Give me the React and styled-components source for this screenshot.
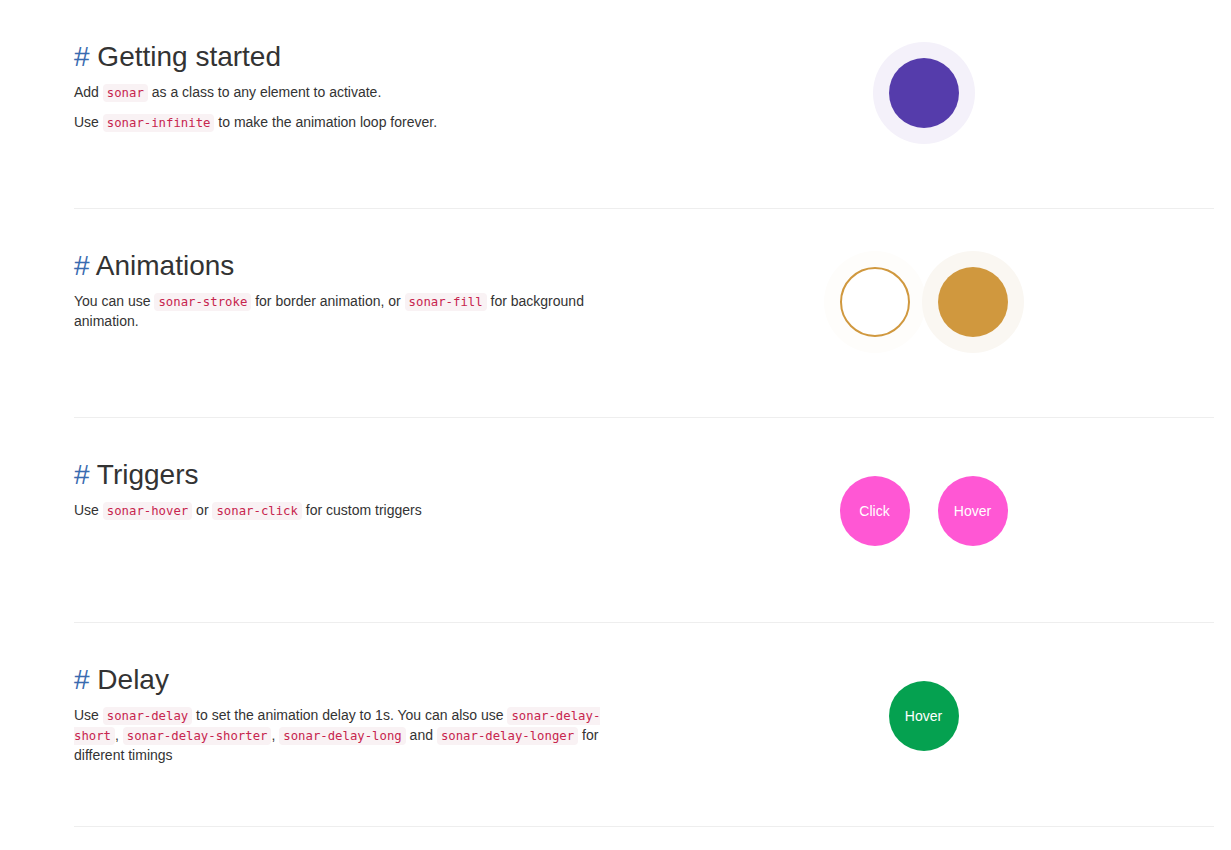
import styled, { createGlobalStyle } from "styled-components";

const GlobalStyle = createGlobalStyle`
    body {
        margin: 0;
        background: #fff;
        color: #333;
        font-family: "Liberation Sans", Arial, sans-serif;
        font-size: 14px;
        line-height: 20px;
    }
`;

const Page = styled.main`
    width: 1140px;
    margin-left: 74px;
`;

const Section = styled.section`
    display: grid;
    grid-template-columns: 559px 1fr;
    box-sizing: border-box;
    min-height: ${(p) => p.$height}px;
    padding-top: 41px;
    border-bottom: 1px solid #eee;
`;

const TextCol = styled.div`
    width: 555px;
`;

const Heading = styled.h2`
    margin: 0 0 10px;
    font-size: 28px;
    font-weight: 400;
    line-height: 31px;
    color: #333;
`;

const Hash = styled.span`
    color: #3a6bb0;
`;

const Para = styled.p`
    margin: 0 0 10px;
`;

const Code = styled.code`
    padding: 2px 4px;
    font-family: "DejaVu Sans Mono", "Liberation Mono", monospace;
    font-size: 12.3px;
    line-height: 1;
    color: #c7254e;
    background: #f9f2f4;
    border-radius: 4px;
`;

const Demo = styled.div`
    display: flex;
    justify-content: center;
    align-items: flex-start;
    gap: 28px;
    padding-top: 17px;
`;

const Dot = styled.div`
    display: flex;
    justify-content: center;
    align-items: center;
    box-sizing: border-box;
    width: 70px;
    height: 70px;
    border-radius: 50%;
    color: #fff;
    font-size: 14px;
    background: ${(p) => (p.$stroke ? "#fff" : p.$color)};
    border: ${(p) => (p.$stroke ? `2px solid ${p.$color}` : "none")};
    box-shadow: ${(p) => (p.$halo ? `0 0 0 16px ${p.$halo}` : "none")};
`;

const App = () => (
    <>
        <GlobalStyle />
        <Page>
            <Section $height={209}>
                <TextCol>
                    <Heading><Hash>#</Hash> Getting started</Heading>
                    <Para>Add <Code>sonar</Code> as a class to any element to activate.</Para>
                    <Para>Use <Code>sonar-infinite</Code> to make the animation loop forever.</Para>
                </TextCol>
                <Demo>
                    <Dot $color="#553cab" $halo="#f4f1fa" />
                </Demo>
            </Section>
            <Section $height={209}>
                <TextCol>
                    <Heading><Hash>#</Hash> Animations</Heading>
                    <Para>
                        You can use <Code>sonar-stroke</Code> for border animation, or <Code>sonar-fill</Code> for background animation.
                    </Para>
                </TextCol>
                <Demo>
                    <Dot $stroke $color="#d0983e" $halo="#fefdfb" />
                    <Dot $color="#d0983e" $halo="#faf7f2" />
                </Demo>
            </Section>
            <Section $height={205}>
                <TextCol>
                    <Heading><Hash>#</Hash> Triggers</Heading>
                    <Para>Use <Code>sonar-hover</Code> or <Code>sonar-click</Code> for custom triggers</Para>
                </TextCol>
                <Demo>
                    <Dot $color="#ff57d4">Click</Dot>
                    <Dot $color="#ff57d4">Hover</Dot>
                </Demo>
            </Section>
            <Section $height={204}>
                <TextCol>
                    <Heading><Hash>#</Hash> Delay</Heading>
                    <Para>
                        Use <Code>sonar-delay</Code> to set the animation delay to 1s. You can also use <Code>sonar-delay-short</Code>, <Code>sonar-delay-shorter</Code>, <Code>sonar-delay-long</Code> and <Code>sonar-delay-longer</Code> for different timings
                    </Para>
                </TextCol>
                <Demo>
                    <Dot $color="#05a150">Hover</Dot>
                </Demo>
            </Section>
        </Page>
    </>
);

export default App;
